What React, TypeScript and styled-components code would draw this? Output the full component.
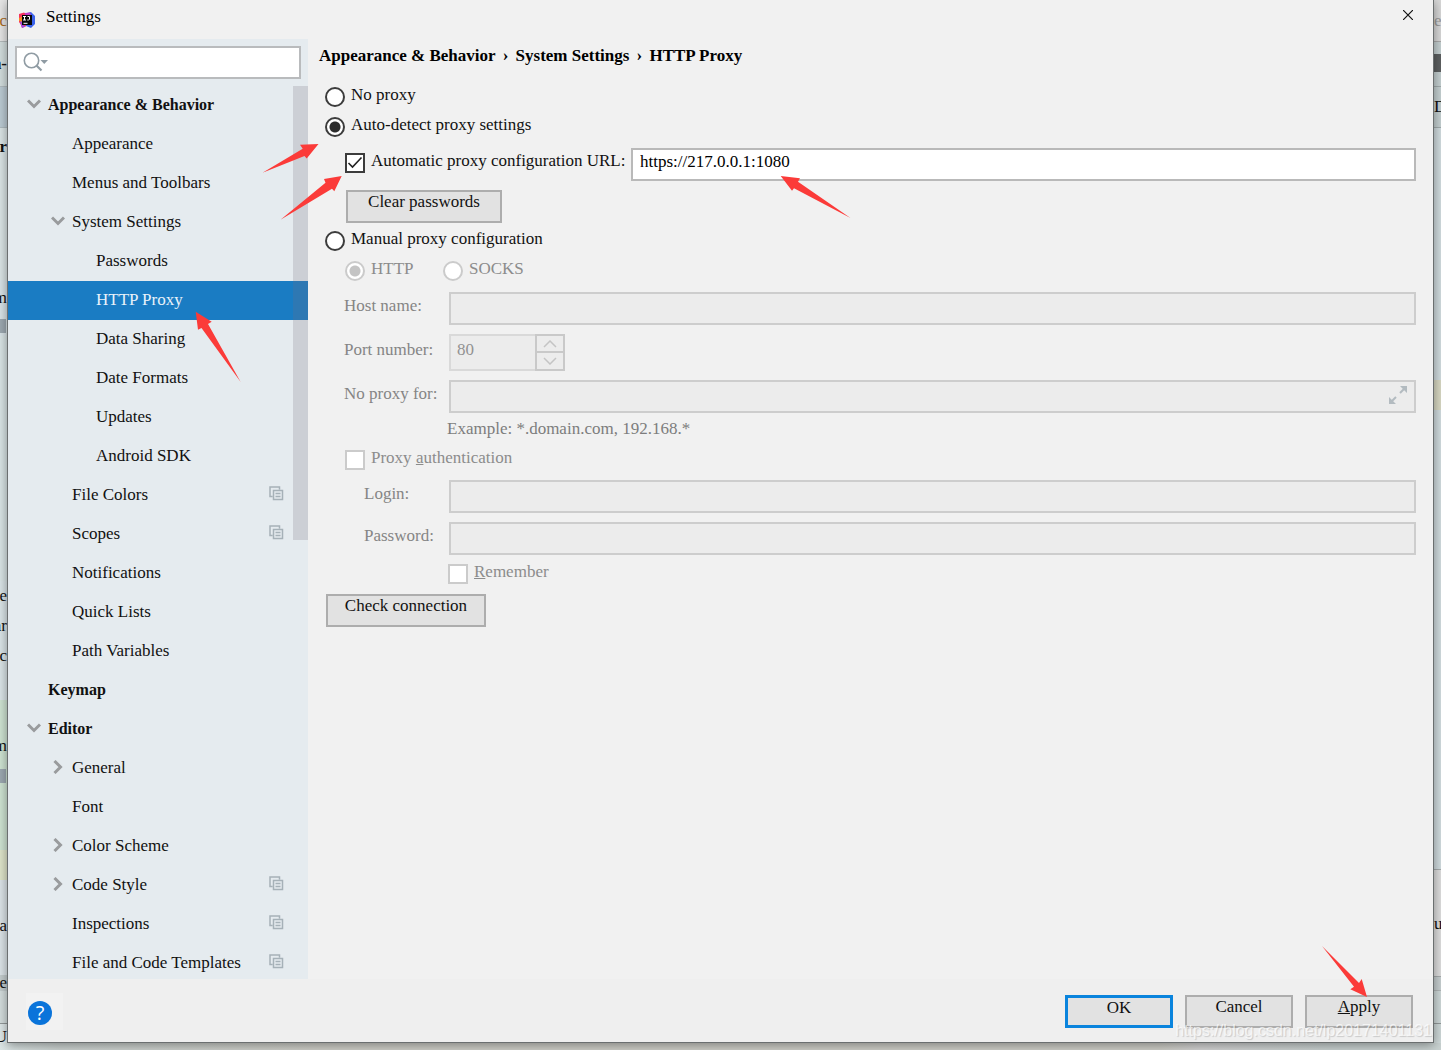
import React, { useState } from "react";
import styled, { createGlobalStyle, css } from "styled-components";

const GlobalStyle = createGlobalStyle`
  *, *::before, *::after { box-sizing: border-box; }
  body {
    margin: 0;
    overflow: hidden;
    background: #d3dcdd;
    color: #000;
    font: 17px/20px "Liberation Serif", "Times New Roman", serif;
  }
  button, input { font: inherit; color: inherit; margin: 0; }
  svg { flex: none; }
`;

/* ---------- editor window behind the dialog ---------- */

const Desktop = styled.div`
  position: relative;
  display: grid;
  grid-template: minmax(0, 1fr) 7px / 7px minmax(0, 1fr) 7px;
  height: 100vh;
`;

const Strip = styled.div`
  display: flex;
  flex-direction: column;
  overflow: hidden;
`;

const Band = styled.div<{ $h: number; $bg: string; $line?: string; $end?: boolean; $bold?: boolean; $color?: string }>`
  display: flex;
  flex: none;
  align-items: center;
  justify-content: ${(p) => (p.$end ? "flex-end" : "flex-start")};
  height: ${(p) => p.$h}px;
  overflow: hidden;
  background: ${(p) => p.$bg};
  border-bottom: ${(p) => (p.$line ? `1px solid ${p.$line}` : "0")};
  font-weight: ${(p) => (p.$bold ? 700 : 400)};
  color: ${(p) => p.$color ?? "#111"};
`;

const Marker = styled.span`
  width: 6px;
  height: 14px;
  margin-right: 1px;
  background: #9da9b1;
`;

const Ground = styled.div`
  grid-column: 1 / -1;
  background: linear-gradient(to right, #dbe5e5 0, #ccd3d1 60px, #cfcfc8 320px, #cfcfc8 1160px, #d4d4d4 1200px, #c9d2d1 1330px);
`;

/* ---------- dialog ---------- */

const Dialog = styled.section`
  position: relative;
  z-index: 1;
  display: flex;
  flex-direction: column;
  min-width: 0;
  border: 1px solid #6b6f70;
  border-top: 0;
  background: #f1f1f1;
  box-shadow: 0 2px 10px rgba(0, 0, 0, 0.4);
`;

const TitleBar = styled.header`
  display: flex;
  flex: none;
  align-items: center;
  gap: 11px;
  height: 39px;
  padding: 0 16px 6px 11px;
`;

const Title = styled.h1`
  flex: 1;
  margin: 0;
  font-size: 17px;
  font-weight: 400;
`;

const IconButton = styled.button`
  display: flex;
  align-items: center;
  justify-content: center;
  width: 18px;
  height: 24px;
  padding: 0 0 3px;
  border: 0;
  background: none;
`;

const Body = styled.div`
  display: grid;
  flex: 1;
  grid-template-columns: 300px minmax(0, 1fr);
  min-height: 0;
`;

const Sidebar = styled.aside`
  display: flex;
  flex-direction: column;
  min-height: 0;
  background: #e5ebef;
`;

const Search = styled.label`
  display: flex;
  flex: none;
  align-items: center;
  height: 33px;
  margin: 7px;
  padding: 0 6px 2px;
  border: 2px solid #b9bbbd;
  background: #fff;

  input { flex: 1; min-width: 0; border: 0; outline: 0; background: none; }
`;

const TreeArea = styled.nav`
  position: relative;
  flex: 1;
  min-height: 0;
  overflow: hidden;
`;

const Thumb = styled.div`
  position: absolute;
  top: 0;
  right: 0;
  width: 15px;
  height: 454px;
  background: rgba(120, 110, 125, 0.22);
`;

const Tree = styled.ul`
  margin: 0;
  padding: 0;
  list-style: none;
`;

const TreeItem = styled.li<{ $level: number; $selected?: boolean }>`
  display: flex;
  align-items: center;
  height: 39px;
  padding: 0 24px 2px ${(p) => 16 + p.$level * 24}px;
  background: ${(p) => (p.$selected ? "#1a7cc3" : "transparent")};
  color: ${(p) => (p.$selected ? "#e9f2fa" : "#111")};
`;

const Toggle = styled.span`
  display: flex;
  justify-content: center;
  width: 24px;
  padding: 0 4px 2px 0;
`;

const TreeLabel = styled.a<{ $bold?: boolean }>`
  flex: 1;
  color: inherit;
  text-decoration: none;
  font-size: ${(p) => (p.$bold ? 16 : 17)}px;
  font-weight: ${(p) => (p.$bold ? 700 : 400)};
`;

const Panel = styled.main`
  display: flex;
  flex-direction: column;
  min-width: 0;
  padding: 0 17px 0 11px;
`;

const Crumbs = styled.ol`
  display: flex;
  align-items: center;
  height: 34px;
  margin: 0 0 9px;
  padding: 0;
  list-style: none;
  font-weight: 700;

  li + li::before {
    content: "›";
    display: inline-block;
    width: 20px;
    text-align: center;
  }
`;

const Form = styled.form`
  display: flex;
  flex-direction: column;
  align-items: stretch;
  padding-left: 6px;
`;

const Group = styled.div<{ $top?: number; $indent?: number }>`
  display: grid;
  gap: 9px;
  padding-top: ${(p) => p.$top ?? 0}px;
  padding-left: ${(p) => p.$indent ?? 0}px;
`;

const Choices = styled.div`
  display: grid;
  grid-template-columns: 98px 1fr;
`;

const Choice = styled.label<{ $muted?: boolean }>`
  display: flex;
  align-items: center;
  gap: 6px;
  height: 30px;
  color: ${(p) => (p.$muted ? "#8c8c8c" : "#111")};
`;

const Caption = styled.span`
  padding-bottom: 4px;
  white-space: nowrap;
`;

const mark = css`
  appearance: none;
  flex: none;
  width: 20px;
  height: 20px;
  border: 2px solid #3c3c3c;
  background: #fff;
  &:disabled { border-color: #cbcbcb; }
`;

const Radio = styled.input.attrs({ type: "radio" })`
  ${mark}
  border-radius: 50%;
  &:checked { background: radial-gradient(circle, #2d2d2d 5px, #fff 6px); }
  &:disabled:checked { background: radial-gradient(circle, #c4c4c4 5px, #fff 6px); }
`;

const TickBox = styled.span`
  display: grid;
  flex: none;
  width: 20px;
  height: 20px;

  & > * { grid-area: 1 / 1; }
  svg { pointer-events: none; }
`;

const Tick = styled.input.attrs({ type: "checkbox" })`
  ${mark}
  & + svg { visibility: hidden; }
  &:checked + svg { visibility: visible; }
`;

const UrlRow = styled.div`
  display: grid;
  grid-template-columns: 286px minmax(0, 1fr);
  align-items: start;
`;

const FieldRow = styled.div<{ $inset?: boolean }>`
  display: grid;
  grid-template-columns: 105px minmax(0, 1fr);
  align-items: center;
  color: #858585;

  & > label { padding: 0 0 6px ${(p) => (p.$inset ? 20 : 0)}px; }
`;

const TextField = styled.input`
  width: 100%;
  height: 33px;
  padding: 0 7px 5px;
  border: 2px solid #b9b9b9;
  border-radius: 0;
  outline: 0;
  background: #fff;
  &:disabled { border-color: #cdcdcd; background: #ececec; color: #8c8c8c; }
`;

const Expandable = styled.div`
  display: grid;
  align-items: center;

  & > * { grid-area: 1 / 1; }
  & > button { justify-self: end; margin-right: 9px; }
`;

const Spinner = styled.div`
  display: grid;
  grid-template: 19px 18px / 86px 30px;
  width: 116px;

  input {
    grid-row: 1 / 3;
    height: 37px;
    padding: 0 6px 6px;
    border: 2px solid #d9d9d9;
    border-right: 0;
    border-radius: 0;
    background: #ececec;
    color: #929292;
  }
`;

const StepButton = styled.button`
  display: flex;
  align-items: center;
  justify-content: center;
  padding: 0;
  border: 2px solid #c9c9c9;
  background: #ececec;
  & + & { border-top: 0; }
`;

const Example = styled.p`
  height: 32px;
  margin: 0;
  padding: 6px 0 0 103px;
  color: #7d7d7d;
`;

const Button = styled.button<{ $width: number; $primary?: boolean }>`
  width: ${(p) => p.$width}px;
  height: 33px;
  padding: 0 0 ${(p) => (p.$primary ? 12 : 10)}px;
  border: ${(p) => (p.$primary ? "3px solid #0a84dd" : "2px solid #adadad")};
  border-radius: 0;
  background: #e2e2e2;
  color: #111;
`;

const Footer = styled.footer`
  display: flex;
  flex: none;
  align-items: center;
  gap: 12px;
  height: 63px;
  padding: 2px 20px 0 18px;
  background: #efefef;
`;

const HelpButton = styled.button`
  display: flex;
  align-items: center;
  width: 37px;
  height: 37px;
  margin-right: auto;
  padding: 2px 2px 0;
  border: 0;
  background: #f2f2f2;

  span {
    width: 24px;
    height: 24px;
    border-radius: 50%;
    background: #0a74da;
    color: #fff;
    font: 20px/24px "Open Sans", sans-serif;
  }
`;

const Watermark = styled.div`
  position: absolute;
  right: 9px;
  bottom: 9px;
  z-index: 2;
  color: rgba(255, 255, 255, 0.7);
  font: 16px/20px "Liberation Sans", Arial, sans-serif;
  text-shadow: 1px 1px 1px rgba(0, 0, 0, 0.16);
  pointer-events: none;
`;

const Annotations = styled.svg`
  position: absolute;
  top: 0;
  left: 0;
  z-index: 3;
  pointer-events: none;
`;

/* ---------- icons ---------- */

const Logo = () => (
  <svg width="16" height="16" viewBox="0 0 16 16" style={{ marginTop: 6 }} aria-hidden="true">
    <path d="M0 2 5 .5 9 3v10L3 16l-1-3L0 10z" fill="#f5315f" />
    <path d="M1 9 4 7v6l3 1.500L3 16l-1-3z" fill="#a14be0" />
    <path d="M0 6 4 4v6L0 9z" fill="#f98a22" />
    <path d="M8 1 12 0l4 4v8l-4 4-5-2z" fill="#3b63ec" />
    <path d="m6 1 5-.500 1 3-6 0z" fill="#c33cc5" />
    <path d="M3 3h10v10H3z" fill="#080808" />
    <path d="M4 4.500h3M5.500 4.500v3.500M4 8h3M8.500 4.500h2v2.750L9.750 8H8.250M4.500 11.300h4" fill="none" stroke="#fff" strokeWidth="1" />
  </svg>
);

const CloseIcon = () => (
  <svg width="10" height="10" viewBox="0 0 10 10" aria-hidden="true">
    <path d="m0 0 10 10M10 0 0 10" stroke="#111" strokeWidth="1.200" />
  </svg>
);

const SearchIcon = () => (
  <svg width="26" height="20" viewBox="0 0 26 20" aria-hidden="true">
    <circle cx="8.500" cy="8.500" r="7.200" fill="none" stroke="#8f9ba3" strokeWidth="1.600" />
    <path d="m13.500 13.500 5 5" stroke="#8f9ba3" strokeWidth="2.200" />
    <path d="M17.500 8h7.500l-3.750 4z" fill="#8f9ba3" />
  </svg>
);

const Chevron = ({ open }: { open: boolean }) =>
  open ? (
    <svg width="14" height="10" viewBox="0 0 14 10" aria-hidden="true">
      <path d="m1 1.500 6 6 6-6" fill="none" stroke="#999b9d" strokeWidth="3" />
    </svg>
  ) : (
    <svg width="10" height="14" viewBox="0 0 10 14" aria-hidden="true">
      <path d="m1.500 1 6 6-6 6" fill="none" stroke="#999b9d" strokeWidth="3" />
    </svg>
  );

const ProjectIcon = () => (
  <svg width="15" height="17" viewBox="0 0 15 17" aria-hidden="true">
    <path d="M3.500 10.500h-2.500v-9.500h9.500v2.500M4.500 4.500h9v9h-9z" fill="none" stroke="#a6b1b8" strokeWidth="1.500" />
    <path d="M6.500 7.500h5M6.500 10.500h5" stroke="#a6b1b8" strokeWidth="1.300" />
  </svg>
);

const StepIcon = ({ up }: { up?: boolean }) => (
  <svg width="14" height="8" viewBox="0 0 14 8" aria-hidden="true">
    <path d={up ? "m1 7 6-6 6 6" : "m1 1 6 6 6-6"} fill="none" stroke="#c4c4c4" strokeWidth="1.500" />
  </svg>
);

const ExpandIcon = () => (
  <svg width="18" height="18" viewBox="0 0 18 18" aria-hidden="true">
    <path d="M11 0h7v7zM0 11v7h7z" fill="#b3bbc0" />
    <path d="m11 7 4-4M7 11l-4 4" stroke="#b3bbc0" strokeWidth="2" />
  </svg>
);

const CheckMark = () => (
  <svg width="20" height="20" viewBox="0 0 20 20" aria-hidden="true">
    <path d="m3.500 10 4 4 9-9.500" fill="none" stroke="#222" strokeWidth="1.600" />
  </svg>
);

/* ---------- data ---------- */

type Node = { label: string; level: number; open?: boolean; bold?: boolean; project?: boolean };

const nodes: Node[] = [
  { label: "Appearance & Behavior", level: 0, open: true, bold: true },
  { label: "Appearance", level: 1 },
  { label: "Menus and Toolbars", level: 1 },
  { label: "System Settings", level: 1, open: true },
  { label: "Passwords", level: 2 },
  { label: "HTTP Proxy", level: 2 },
  { label: "Data Sharing", level: 2 },
  { label: "Date Formats", level: 2 },
  { label: "Updates", level: 2 },
  { label: "Android SDK", level: 2 },
  { label: "File Colors", level: 1, project: true },
  { label: "Scopes", level: 1, project: true },
  { label: "Notifications", level: 1 },
  { label: "Quick Lists", level: 1 },
  { label: "Path Variables", level: 1 },
  { label: "Keymap", level: 0, bold: true },
  { label: "Editor", level: 0, open: true, bold: true },
  { label: "General", level: 1, open: false },
  { label: "Font", level: 1 },
  { label: "Color Scheme", level: 1, open: false },
  { label: "Code Style", level: 1, open: false, project: true },
  { label: "Inspections", level: 1, project: true },
  { label: "File and Code Templates", level: 1, project: true },
];

type BandData = { h: number; bg: string; text?: string; line?: string; bold?: boolean; color?: string; marker?: boolean };

const leftBands: BandData[] = [
  { h: 42, bg: "#e6e6e6", text: "c", line: "#b5bcbd", color: "#a8691c" },
  { h: 45, bg: "#d3dede", text: "n-", line: "#b1bcc0", bold: true },
  { h: 41, bg: "#bccbd4", line: "#aebbc0" },
  { h: 37, bg: "#dbe5e6", text: "or", bold: true },
  { h: 115, bg: "#dbe5e6" },
  { h: 36, bg: "#d9e4e8", text: "m" },
  { h: 20, bg: "#d9e4e8", marker: true },
  { h: 245, bg: "#dae5e6" },
  { h: 30, bg: "#dbe5e8", text: "e" },
  { h: 30, bg: "#dbe5e8", text: "ar" },
  { h: 30, bg: "#dbe5e8", text: "oc" },
  { h: 29, bg: "#dbe5e8" },
  { h: 30, bg: "#cfe4d3" },
  { h: 31, bg: "#cfe4d3", text: "m" },
  { h: 30, bg: "#cfe4d3", marker: true },
  { h: 59, bg: "#cfe4d3" },
  { h: 30, bg: "#dfe5ca" },
  { h: 31, bg: "#dce4e8" },
  { h: 30, bg: "#dce4e8", text: "a" },
  { h: 34, bg: "#dce4e8" },
  { h: 16, bg: "#c4cdce", text: "e" },
  { h: 33, bg: "#d5dede", line: "#93999a" },
  { h: 26, bg: "#dfe8e9", text: "U" },
];

const rightBands: BandData[] = [
  { h: 42, bg: "#d8d8d8", text: "e", line: "#aaaaaa", color: "#9b9b9b" },
  { h: 12, bg: "#c5d0d1" },
  { h: 18, bg: "#5d6061" },
  { h: 15, bg: "#c5d0d1", line: "#a2acad" },
  { h: 41, bg: "#c5d0d1", text: "D", line: "#a2acad" },
  { h: 252, bg: "#d1dcdf" },
  { h: 30, bg: "#d8d8c3" },
  { h: 460, bg: "#d1dcdf", line: "#a7acad" },
  { h: 36, bg: "#dedede" },
  { h: 36, bg: "#dedede", text: "ur" },
  { h: 35, bg: "#dedede", line: "#a7acad" },
  { h: 14, bg: "#c7cfd0", line: "#b1b7b8" },
  { h: 33, bg: "#ced8d8", line: "#93999a" },
  { h: 26, bg: "#ced8d8" },
];

const arrows = [
  "318.500,144 300,144.700 302.700,148.700 262.500,172.700 304.500,156 306.700,158.500",
  "341.700,176 324,179 325.500,182.700 280.500,219.700 332,188.700 334.300,191.300",
  "195.700,311.700 211.700,321.700 208,324 240.700,382 201.500,328 198,329.700",
  "780.700,176 800,178.300 798,181.700 850.500,218 794,188.300 792,190.700",
  "1367,997 1361.700,979 1359,983 1322,946 1354,986.700 1350.300,989.300",
];

const Bands = ({ data, end }: { data: BandData[]; end?: boolean }) => (
  <Strip aria-hidden="true">
    {data.map((b, i) => (
      <Band key={i} $h={b.h} $bg={b.bg} $line={b.line} $end={end} $bold={b.bold} $color={b.color}>
        {b.marker ? <Marker /> : b.text}
      </Band>
    ))}
  </Strip>
);

const CheckBox = (props: React.InputHTMLAttributes<HTMLInputElement>) => (
  <TickBox>
    <Tick {...props} />
    <CheckMark />
  </TickBox>
);

export default function App() {
  const [selected, setSelected] = useState("HTTP Proxy");
  const [mode, setMode] = useState("auto");

  return (
    <>
      <GlobalStyle />
      <Desktop>
        <Bands data={leftBands} end />
        <Dialog role="dialog" aria-labelledby="dialog-title">
          <TitleBar>
            <Logo />
            <Title id="dialog-title">Settings</Title>
            <IconButton aria-label="Close">
              <CloseIcon />
            </IconButton>
          </TitleBar>

          <Body>
            <Sidebar>
              <Search>
                <SearchIcon />
                <input type="text" aria-label="Search settings" />
              </Search>
              <TreeArea>
                <Tree>
                  {nodes.map((n) => (
                    <TreeItem key={n.label} $level={n.level} $selected={n.label === selected}>
                      <Toggle>{n.open !== undefined && <Chevron open={n.open} />}</Toggle>
                      <TreeLabel href="#" $bold={n.bold} onClick={() => setSelected(n.label)}>
                        {n.label}
                      </TreeLabel>
                      {n.project && <ProjectIcon />}
                    </TreeItem>
                  ))}
                </Tree>
                <Thumb />
              </TreeArea>
            </Sidebar>

            <Panel>
              <Crumbs>
                <li>Appearance &amp; Behavior</li>
                <li>System Settings</li>
                <li>HTTP Proxy</li>
              </Crumbs>
              <Form onSubmit={(e) => e.preventDefault()}>
                <Choice>
                  <Radio name="mode" checked={mode === "none"} onChange={() => setMode("none")} />
                  <Caption>No proxy</Caption>
                </Choice>
                <Choice>
                  <Radio name="mode" checked={mode === "auto"} onChange={() => setMode("auto")} />
                  <Caption>Auto-detect proxy settings</Caption>
                </Choice>
                <Group $top={6} $indent={20}>
                  <UrlRow>
                    <Choice>
                      <CheckBox defaultChecked />
                      <Caption>Automatic proxy configuration URL:</Caption>
                    </Choice>
                    <TextField type="text" aria-label="Proxy configuration URL" defaultValue="https://217.0.0.1:1080" />
                  </UrlRow>
                </Group>
                <Group $top={9} $indent={21}>
                  <Button type="button" $width={156}>
                    Clear passwords
                  </Button>
                </Group>
                <Group $top={3}>
                  <Choice>
                    <Radio name="mode" checked={mode === "manual"} onChange={() => setMode("manual")} />
                    <Caption>Manual proxy configuration</Caption>
                  </Choice>
                </Group>
                <Group $indent={20}>
                  <Choices>
                    <Choice $muted>
                      <Radio name="protocol" defaultChecked disabled />
                      <Caption>HTTP</Caption>
                    </Choice>
                    <Choice $muted>
                      <Radio name="protocol" disabled />
                      <Caption>SOCKS</Caption>
                    </Choice>
                  </Choices>
                </Group>
                <Group $top={6} $indent={19}>
                  <FieldRow>
                    <label htmlFor="host">Host name:</label>
                    <TextField id="host" type="text" disabled />
                  </FieldRow>
                  <FieldRow>
                    <label htmlFor="port">Port number:</label>
                    <Spinner>
                      <input id="port" type="text" defaultValue="80" disabled />
                      <StepButton type="button" aria-label="Increase port" disabled>
                        <StepIcon up />
                      </StepButton>
                      <StepButton type="button" aria-label="Decrease port" disabled>
                        <StepIcon />
                      </StepButton>
                    </Spinner>
                  </FieldRow>
                  <FieldRow>
                    <label htmlFor="bypass">No proxy for:</label>
                    <Expandable>
                      <TextField id="bypass" type="text" disabled />
                      <IconButton type="button" aria-label="Expand" disabled>
                        <ExpandIcon />
                      </IconButton>
                    </Expandable>
                  </FieldRow>
                </Group>
                <Group $indent={19}>
                  <Example>Example: *.domain.com, 192.168.*</Example>
                </Group>
                <Group $indent={20}>
                  <Choice $muted>
                    <CheckBox disabled />
                    <Caption>
                      Proxy <u>a</u>uthentication
                    </Caption>
                  </Choice>
                </Group>
                <Group $top={5} $indent={19}>
                  <FieldRow $inset>
                    <label htmlFor="login">Login:</label>
                    <TextField id="login" type="text" disabled />
                  </FieldRow>
                  <FieldRow $inset>
                    <label htmlFor="password">Password:</label>
                    <TextField id="password" type="password" disabled />
                  </FieldRow>
                </Group>
                <Group $top={4} $indent={123}>
                  <Choice $muted>
                    <CheckBox disabled />
                    <Caption>
                      <u>R</u>emember
                    </Caption>
                  </Choice>
                </Group>
                <Group $top={5} $indent={1}>
                  <Button type="button" $width={160}>
                    Check connection
                  </Button>
                </Group>
              </Form>
            </Panel>
          </Body>

          <Footer>
            <HelpButton aria-label="Help">
              <span>?</span>
            </HelpButton>
            <Button $width={108} $primary>
              OK
            </Button>
            <Button $width={108}>Cancel</Button>
            <Button $width={108}>
              <u>A</u>pply
            </Button>
          </Footer>
        </Dialog>
        <Bands data={rightBands} />
        <Ground />

        <Watermark>https://blog.csdn.net/lp20171401131</Watermark>
        <Annotations width="1441" height="1050" viewBox="0 0 1441 1050" aria-hidden="true">
          {arrows.map((points) => (
            <polygon key={points} points={points} fill="#fb3b39" />
          ))}
        </Annotations>
      </Desktop>
    </>
  );
}
